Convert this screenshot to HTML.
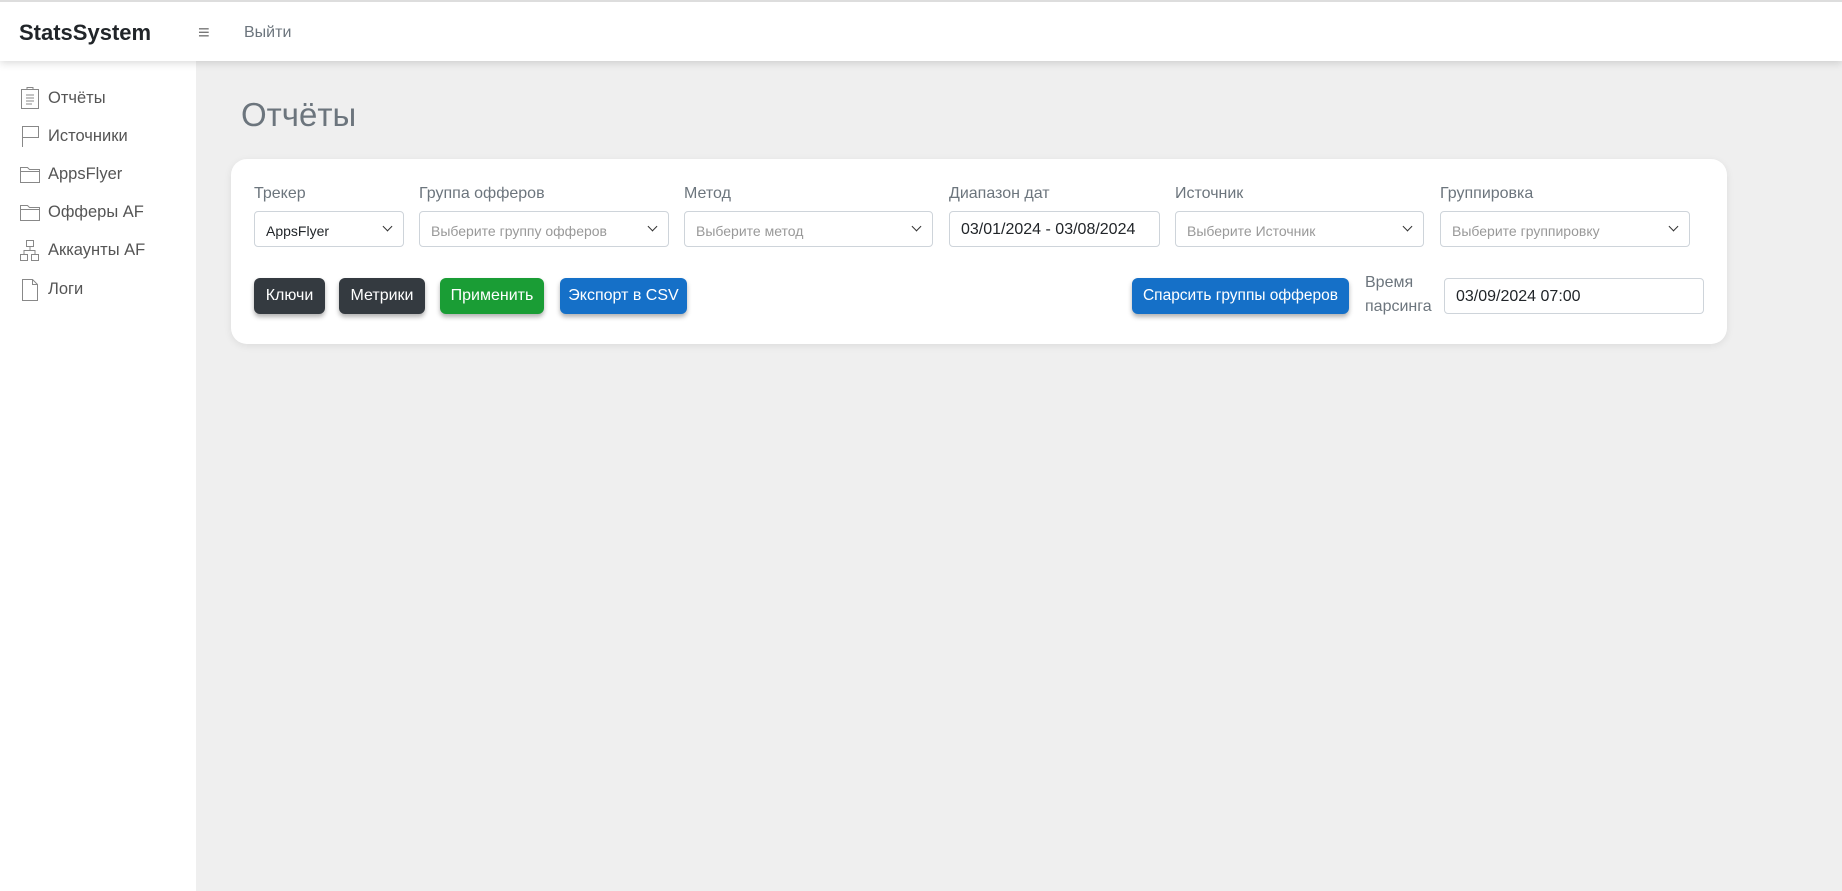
<!DOCTYPE html>
<html><head><meta charset="utf-8"><style>
*{box-sizing:border-box;margin:0;padding:0}
body{width:1842px;height:891px;overflow:hidden;background:#efefef;font-family:"Liberation Sans",sans-serif;position:relative}
.top{position:absolute;left:0;top:0;width:1842px;height:61px;background:#fff;border-top:2px solid #ddd;box-shadow:0 2px 8px rgba(0,0,0,.15);z-index:2}
.brand{position:absolute;left:19px;top:18px;font-size:22px;font-weight:bold;color:#212529}
.ham{position:absolute;left:198px;top:20px;font-size:20px;color:#777}
.out{position:absolute;left:244px;top:22px;font-size:16px;color:#6c757d}
.side{position:absolute;left:0;top:61px;width:196px;height:830px;background:#fff}
.item{position:absolute;left:19px;height:24px;display:flex;align-items:center;font-size:16.5px;color:#555}
.item svg{width:22px;height:24px;margin-right:7px}
h1{position:absolute;left:241px;top:96px;font-size:33px;font-weight:normal;color:#6c757d}
.card{position:absolute;left:231px;top:159px;width:1496px;height:185px;background:#fff;border-radius:16px;box-shadow:0 2px 8px rgba(0,0,0,.08)}
.lbl{position:absolute;top:185px;font-size:16px;color:#6c757d}
.sel{position:absolute;top:211px;height:36px;border:1px solid #ced4da;border-radius:4px;background:#fff;font-size:14px;color:#999;padding:11px 11px;white-space:nowrap}
.sel.v{color:#212529}
.sel .ch{position:absolute;right:12px;top:11px;width:7px;height:7px;border-right:1.5px solid #333;border-bottom:1.5px solid #333;transform:rotate(45deg)}
.btn{position:absolute;top:278px;height:36px;border-radius:6px;color:#fff;font-size:16px;display:flex;align-items:center;justify-content:center;box-shadow:0 3px 5px rgba(0,0,0,.3)}
.d{background:#343a40}.g{background:#1a9d35}.b{background:#1570c8}
</style></head><body>
<div class="top"><div class="brand">StatsSystem</div><div class="ham">≡</div><div class="out">Выйти</div></div>
<div class="side">
<div class="item" style="top:25px"><svg viewBox="0 0 22 24" fill="none" stroke="#888" stroke-width="1"><rect x="2.5" y="3.5" width="17" height="19"/><path d="M8 3.5V1.5h6v2M7 9h8M7 12h8M7 15h8M7 18h6"/></svg>Отчёты</div>
<div class="item" style="top:63px"><svg viewBox="0 0 22 24" fill="none" stroke="#888" stroke-width="1"><path d="M3.5 23V2.5h16v11h-16"/></svg>Источники</div>
<div class="item" style="top:101px"><svg viewBox="0 0 22 24" fill="none" stroke="#888" stroke-width="1"><path d="M1.5 5.5h7l2 2h10v13h-19zM1.5 9.5h19"/></svg>AppsFlyer</div>
<div class="item" style="top:139px"><svg viewBox="0 0 22 24" fill="none" stroke="#888" stroke-width="1"><path d="M1.5 5.5h7l2 2h10v13h-19zM1.5 9.5h19"/></svg>Офферы AF</div>
<div class="item" style="top:177px"><svg viewBox="0 0 22 24" fill="none" stroke="#888" stroke-width="1"><rect x="7.5" y="2.5" width="7" height="6"/><rect x="1.5" y="16.5" width="7" height="6"/><rect x="12.5" y="16.5" width="7" height="6"/><path d="M11 8.5v4M5 16.5v-4h11v4"/></svg>Аккаунты AF</div>
<div class="item" style="top:216px"><svg viewBox="0 0 22 24" fill="none" stroke="#888" stroke-width="1"><path d="M3.5 2.5h10l5 5v16h-15zM13.5 2.5v5h5"/></svg>Логи</div>
</div>
<h1>Отчёты</h1>
<div class="card"></div>
<div class="lbl" style="left:254px">Трекер</div>
<div class="lbl" style="left:419px">Группа офферов</div>
<div class="lbl" style="left:684px">Метод</div>
<div class="lbl" style="left:949px">Диапазон дат</div>
<div class="lbl" style="left:1175px">Источник</div>
<div class="lbl" style="left:1440px">Группировка</div>
<div class="sel v" style="left:254px;width:150px">AppsFlyer<span class="ch"></span></div>
<div class="sel" style="left:419px;width:250px">Выберите группу офферов<span class="ch"></span></div>
<div class="sel" style="left:684px;width:249px">Выберите метод<span class="ch"></span></div>
<div class="sel v" style="left:949px;width:211px;font-size:16px;padding-top:9px">03/01/2024 - 03/08/2024</div>
<div class="sel" style="left:1175px;width:249px">Выберите Источник<span class="ch"></span></div>
<div class="sel" style="left:1440px;width:250px">Выберите группировку<span class="ch"></span></div>
<div class="btn d" style="left:254px;width:71px">Ключи</div>
<div class="btn d" style="left:339px;width:86px">Метрики</div>
<div class="btn g" style="left:440px;width:104px">Применить</div>
<div class="btn b" style="left:560px;width:127px">Экспорт в CSV</div>
<div class="btn b" style="left:1132px;width:217px;font-size:15.5px">Спарсить группы офферов</div>
<div style="position:absolute;left:1365px;top:271px;font-size:16px;color:#6c757d;line-height:24px">Время<br>парсинга</div>
<div class="sel v" style="left:1444px;top:278px;width:260px;font-size:16px;padding-top:9px">03/09/2024 07:00</div>
</body></html>
